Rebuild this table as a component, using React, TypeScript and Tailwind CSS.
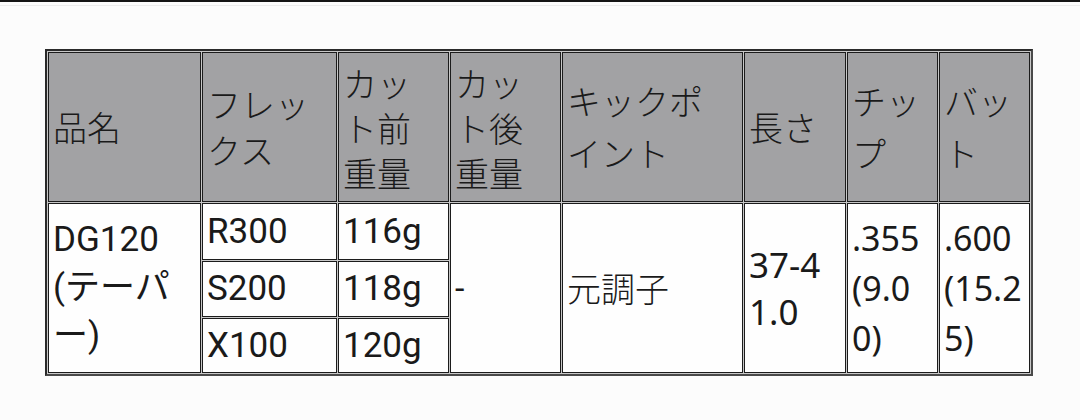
import React from "react";

const jp = "font-['Noto_Sans_CJK_JP','Noto_Sans',sans-serif] font-light";
const rb = "font-['Roboto','Noto_Sans_CJK_JP',sans-serif]";
const ns = "font-['Noto_Sans','Noto_Sans_CJK_JP',sans-serif]";

const head = `bg-[#a2a2a4] border border-[#1c1c1c] flex items-center pl-[4px] pr-[2px] text-[34px] text-[#1a1a1a] whitespace-nowrap ${jp}`;
const body = `bg-[#fefefe] border border-[#1c1c1c] flex items-center pl-[4px] pr-[2px] text-[#1a1a1a] whitespace-nowrap`;

export default function App() {
  return (
    <div className="w-[1080px] h-[420px] bg-[#fcfcfc] overflow-hidden">
      <div className="h-[2px] bg-[#151515]" />
      <div className="mt-[3px] h-px bg-[#ededed]" />
      <div className="ml-[45px] mt-[43px] w-[988px] border-2 border-t-[#2a2a2a] border-l-[#2a2a2a] border-r-[#4a4a4a] border-b-[#4a4a4a] bg-[#c8c8c8] p-px grid gap-px grid-cols-[153px_135px_111px_111px_181px_102px_91px_91px] grid-rows-[150px_57px_56px_55px]">
        <div className={`${head} leading-[46px]`}>品名</div>
        <div className={`${head} leading-[46px]`}>
          <span>フレッ<br />クス</span>
        </div>
        <div className={`${head} leading-[45px]`}>
          <span>カッ<br />ト前<br />重量</span>
        </div>
        <div className={`${head} leading-[45px]`}>
          <span>カッ<br />ト後<br />重量</span>
        </div>
        <div className={`${head} leading-[52px]`}>
          <span>キックポ<br />イント</span>
        </div>
        <div className={`${head} leading-[46px]`}>長さ</div>
        <div className={`${head} leading-[52px]`}>
          <span>チッ<br />プ</span>
        </div>
        <div className={`${head} leading-[52px]`}>
          <span>バッ<br />ト</span>
        </div>

        <div className={`${body} row-span-3 text-[35px] leading-[48px] ${rb}`}>
          <span>DG120<br />(テーパ<br />ー)</span>
        </div>
        <div className={`${body} text-[35px] leading-[40px] ${rb}`}>R300</div>
        <div className={`${body} text-[35px] leading-[40px] ${rb}`}>116g</div>
        <div className={`${body} row-span-3 text-[34px] leading-[40px] ${rb}`}>-</div>
        <div className={`${body} row-span-3 text-[34px] leading-[46px] ${jp}`}>元調子</div>
        <div className={`${body} row-span-3 text-[35px] leading-[47px] ${ns}`}>
          <span>37-4<br />1.0</span>
        </div>
        <div className={`${body} row-span-3 text-[34px] leading-[50px] ${ns}`}>
          <span>.355<br />(9.0<br />0)</span>
        </div>
        <div className={`${body} row-span-3 text-[34px] leading-[50px] ${ns}`}>
          <span>.600<br />(15.2<br />5)</span>
        </div>

        <div className={`${body} text-[35px] leading-[40px] ${rb}`}>S200</div>
        <div className={`${body} text-[35px] leading-[40px] ${rb}`}>118g</div>
        <div className={`${body} text-[35px] leading-[40px] ${rb}`}>X100</div>
        <div className={`${body} text-[35px] leading-[40px] ${rb}`}>120g</div>
      </div>
    </div>
  );
}
